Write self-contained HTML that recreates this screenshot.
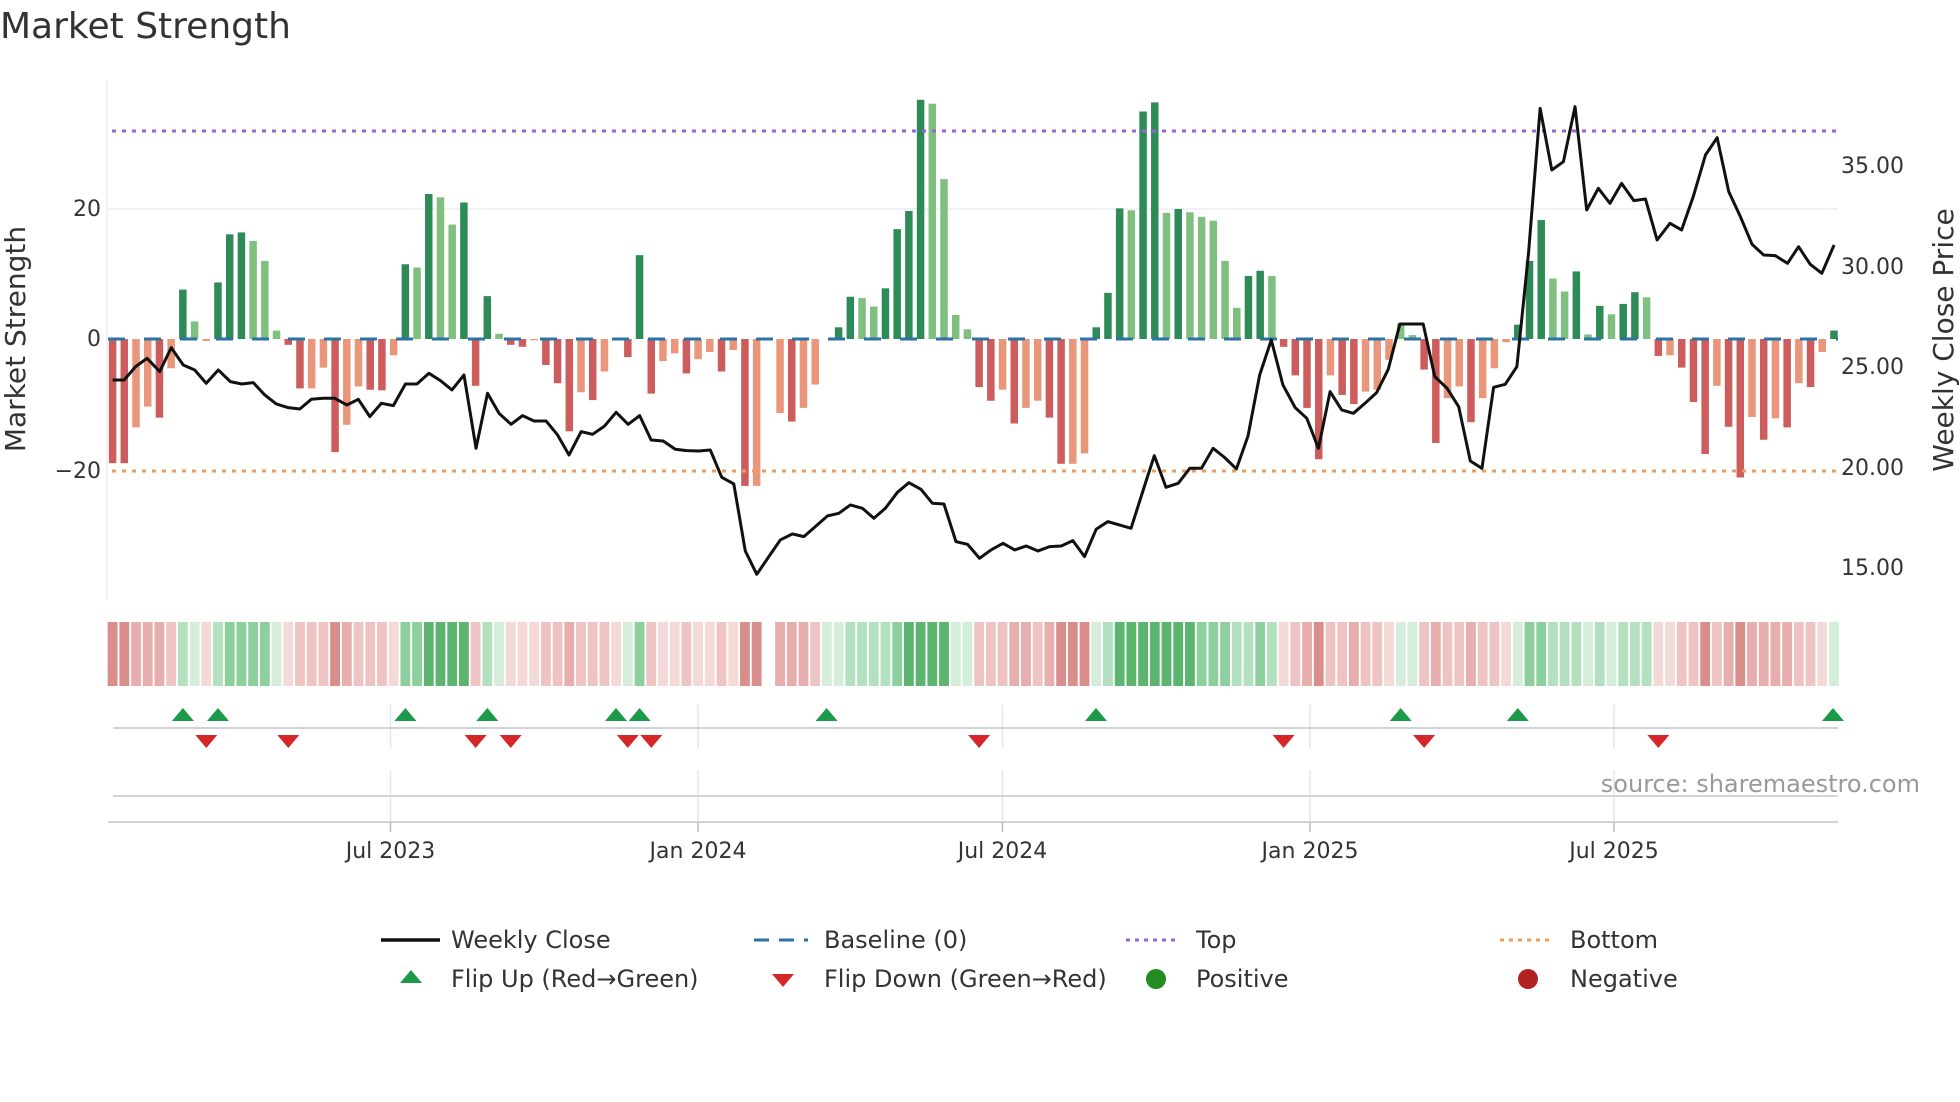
<!DOCTYPE html>
<html><head><meta charset="utf-8"><style>
html,body{margin:0;padding:0;background:#fff;width:1960px;height:1102px;overflow:hidden}
svg{display:block;font-family:"DejaVu Sans","Liberation Sans",sans-serif}
.G{fill:#2e8b57}.g{fill:#7fbf7f}.R{fill:#cd5c5c}.r{fill:#e9967a}
.s1{fill:#f4d9d9}.s2{fill:#eec4c3}.s3{fill:#e6aeac}.s4{fill:#d98e8b}
.t1{fill:#d5eedb}.t2{fill:#b3e0bf}.t3{fill:#8dcf9d}.t4{fill:#5cb56f}
</style></head><body>
<svg width="1960" height="1102" viewBox="0 0 1960 1102">
<text x="0" y="38" font-size="36" fill="#333">Market Strength</text>
<line x1="107" y1="80" x2="107" y2="600" stroke="#eee" stroke-width="1.5"/>
<line x1="108" y1="209" x2="1838" y2="209" stroke="#ececf3" stroke-width="1.5"/>
<text x="101" y="216" font-size="22" fill="#333" text-anchor="end">20</text>
<text x="101" y="346" font-size="22" fill="#333" text-anchor="end">0</text>
<text x="101" y="478" font-size="22" fill="#333" text-anchor="end">−20</text>
<text transform="translate(25,339) rotate(-90)" font-size="28" fill="#333" text-anchor="middle">Market Strength</text>
<text x="1841" y="173" font-size="22" fill="#333">35.00</text>
<text x="1841" y="274" font-size="22" fill="#333">30.00</text>
<text x="1841" y="374" font-size="22" fill="#333">25.00</text>
<text x="1841" y="475" font-size="22" fill="#333">20.00</text>
<text x="1841" y="575" font-size="22" fill="#333">15.00</text>
<text transform="translate(1953,340) rotate(-90)" font-size="28" fill="#333" text-anchor="middle">Weekly Close Price</text>
<g transform="translate(112.6,339) scale(11.71,-6.5)">
<rect class="R" x="-.32" y="-19.1" width=".64" height="19.1"/>
<rect class="R" x=".68" y="-19.1" width=".64" height="19.1"/>
<rect class="r" x="1.68" y="-13.6" width=".64" height="13.6"/>
<rect class="r" x="2.68" y="-10.4" width=".64" height="10.4"/>
<rect class="R" x="3.68" y="-12.1" width=".64" height="12.1"/>
<rect class="r" x="4.68" y="-4.5" width=".64" height="4.5"/>
<rect class="G" x="5.68" y="0" width=".64" height="7.6"/>
<rect class="g" x="6.68" y="0" width=".64" height="2.7"/>
<rect class="r" x="7.68" y="-.3" width=".64" height=".3"/>
<rect class="G" x="8.68" y="0" width=".64" height="8.7"/>
<rect class="G" x="9.68" y="0" width=".64" height="16.1"/>
<rect class="G" x="10.68" y="0" width=".64" height="16.4"/>
<rect class="g" x="11.68" y="0" width=".64" height="15.1"/>
<rect class="g" x="12.68" y="0" width=".64" height="12"/>
<rect class="g" x="13.68" y="0" width=".64" height="1.3"/>
<rect class="R" x="14.68" y="-.9" width=".64" height=".9"/>
<rect class="R" x="15.68" y="-7.6" width=".64" height="7.6"/>
<rect class="r" x="16.68" y="-7.6" width=".64" height="7.6"/>
<rect class="r" x="17.68" y="-4.4" width=".64" height="4.4"/>
<rect class="R" x="18.68" y="-17.4" width=".64" height="17.4"/>
<rect class="r" x="19.68" y="-13.2" width=".64" height="13.2"/>
<rect class="r" x="20.68" y="-7.3" width=".64" height="7.3"/>
<rect class="R" x="21.68" y="-7.8" width=".64" height="7.8"/>
<rect class="R" x="22.68" y="-7.9" width=".64" height="7.9"/>
<rect class="r" x="23.68" y="-2.5" width=".64" height="2.5"/>
<rect class="G" x="24.68" y="0" width=".64" height="11.5"/>
<rect class="g" x="25.68" y="0" width=".64" height="11"/>
<rect class="G" x="26.68" y="0" width=".64" height="22.3"/>
<rect class="g" x="27.68" y="0" width=".64" height="21.8"/>
<rect class="g" x="28.68" y="0" width=".64" height="17.6"/>
<rect class="G" x="29.68" y="0" width=".64" height="21"/>
<rect class="R" x="30.68" y="-7.2" width=".64" height="7.2"/>
<rect class="G" x="31.68" y="0" width=".64" height="6.6"/>
<rect class="g" x="32.68" y="0" width=".64" height=".8"/>
<rect class="R" x="33.68" y="-.9" width=".64" height=".9"/>
<rect class="R" x="34.68" y="-1.2" width=".64" height="1.2"/>
<rect class="r" x="35.68" y="-.2" width=".64" height=".2"/>
<rect class="R" x="36.68" y="-4" width=".64" height="4"/>
<rect class="R" x="37.68" y="-6.8" width=".64" height="6.8"/>
<rect class="R" x="38.68" y="-14.2" width=".64" height="14.2"/>
<rect class="r" x="39.68" y="-8.2" width=".64" height="8.2"/>
<rect class="R" x="40.68" y="-9.4" width=".64" height="9.4"/>
<rect class="r" x="41.68" y="-5" width=".64" height="5"/>
<rect class="R" x="43.68" y="-2.8" width=".64" height="2.8"/>
<rect class="G" x="44.68" y="0" width=".64" height="12.9"/>
<rect class="R" x="45.68" y="-8.4" width=".64" height="8.4"/>
<rect class="r" x="46.68" y="-3.4" width=".64" height="3.4"/>
<rect class="r" x="47.68" y="-2.2" width=".64" height="2.2"/>
<rect class="R" x="48.68" y="-5.3" width=".64" height="5.3"/>
<rect class="r" x="49.68" y="-3.1" width=".64" height="3.1"/>
<rect class="r" x="50.68" y="-2" width=".64" height="2"/>
<rect class="R" x="51.68" y="-5" width=".64" height="5"/>
<rect class="r" x="52.68" y="-1.7" width=".64" height="1.7"/>
<rect class="R" x="53.68" y="-22.6" width=".64" height="22.6"/>
<rect class="r" x="54.68" y="-22.6" width=".64" height="22.6"/>
<rect class="r" x="56.68" y="-11.4" width=".64" height="11.4"/>
<rect class="R" x="57.68" y="-12.7" width=".64" height="12.7"/>
<rect class="r" x="58.68" y="-10.6" width=".64" height="10.6"/>
<rect class="r" x="59.68" y="-7" width=".64" height="7"/>
<rect class="G" x="61.68" y="0" width=".64" height="1.8"/>
<rect class="G" x="62.68" y="0" width=".64" height="6.5"/>
<rect class="g" x="63.68" y="0" width=".64" height="6.3"/>
<rect class="g" x="64.68" y="0" width=".64" height="5"/>
<rect class="G" x="65.68" y="0" width=".64" height="7.8"/>
<rect class="G" x="66.68" y="0" width=".64" height="16.9"/>
<rect class="G" x="67.68" y="0" width=".64" height="19.7"/>
<rect class="G" x="68.68" y="0" width=".64" height="36.8"/>
<rect class="g" x="69.68" y="0" width=".64" height="36.2"/>
<rect class="g" x="70.68" y="0" width=".64" height="24.6"/>
<rect class="g" x="71.68" y="0" width=".64" height="3.7"/>
<rect class="g" x="72.68" y="0" width=".64" height="1.5"/>
<rect class="R" x="73.68" y="-7.4" width=".64" height="7.4"/>
<rect class="R" x="74.68" y="-9.5" width=".64" height="9.5"/>
<rect class="r" x="75.68" y="-7.8" width=".64" height="7.8"/>
<rect class="R" x="76.68" y="-13" width=".64" height="13"/>
<rect class="r" x="77.68" y="-10.6" width=".64" height="10.6"/>
<rect class="r" x="78.68" y="-9.5" width=".64" height="9.5"/>
<rect class="R" x="79.68" y="-12.1" width=".64" height="12.1"/>
<rect class="R" x="80.68" y="-19.2" width=".64" height="19.2"/>
<rect class="r" x="81.68" y="-19.2" width=".64" height="19.2"/>
<rect class="r" x="82.68" y="-17.6" width=".64" height="17.6"/>
<rect class="G" x="83.68" y="0" width=".64" height="1.8"/>
<rect class="G" x="84.68" y="0" width=".64" height="7.1"/>
<rect class="G" x="85.68" y="0" width=".64" height="20.1"/>
<rect class="g" x="86.68" y="0" width=".64" height="19.8"/>
<rect class="G" x="87.68" y="0" width=".64" height="35"/>
<rect class="G" x="88.68" y="0" width=".64" height="36.4"/>
<rect class="g" x="89.68" y="0" width=".64" height="19.4"/>
<rect class="G" x="90.68" y="0" width=".64" height="20"/>
<rect class="g" x="91.68" y="0" width=".64" height="19.5"/>
<rect class="g" x="92.68" y="0" width=".64" height="18.8"/>
<rect class="g" x="93.68" y="0" width=".64" height="18.2"/>
<rect class="g" x="94.68" y="0" width=".64" height="12"/>
<rect class="g" x="95.68" y="0" width=".64" height="4.8"/>
<rect class="G" x="96.68" y="0" width=".64" height="9.7"/>
<rect class="G" x="97.68" y="0" width=".64" height="10.5"/>
<rect class="g" x="98.68" y="0" width=".64" height="9.7"/>
<rect class="R" x="99.68" y="-1.2" width=".64" height="1.2"/>
<rect class="R" x="100.68" y="-5.6" width=".64" height="5.6"/>
<rect class="R" x="101.68" y="-10.6" width=".64" height="10.6"/>
<rect class="R" x="102.68" y="-18.5" width=".64" height="18.5"/>
<rect class="r" x="103.68" y="-5.6" width=".64" height="5.6"/>
<rect class="R" x="104.68" y="-8.6" width=".64" height="8.6"/>
<rect class="R" x="105.68" y="-10" width=".64" height="10"/>
<rect class="r" x="106.68" y="-8.1" width=".64" height="8.1"/>
<rect class="r" x="107.68" y="-7.8" width=".64" height="7.8"/>
<rect class="r" x="108.68" y="-3.2" width=".64" height="3.2"/>
<rect class="g" x="109.68" y="0" width=".64" height="2.4"/>
<rect class="g" x="110.68" y="0" width=".64" height=".6"/>
<rect class="R" x="111.68" y="-4.7" width=".64" height="4.7"/>
<rect class="R" x="112.68" y="-16" width=".64" height="16"/>
<rect class="r" x="113.68" y="-9.1" width=".64" height="9.1"/>
<rect class="r" x="114.68" y="-7.3" width=".64" height="7.3"/>
<rect class="R" x="115.68" y="-12.8" width=".64" height="12.8"/>
<rect class="r" x="116.68" y="-9.1" width=".64" height="9.1"/>
<rect class="r" x="117.68" y="-4.5" width=".64" height="4.5"/>
<rect class="r" x="118.68" y="-.5" width=".64" height=".5"/>
<rect class="G" x="119.68" y="0" width=".64" height="2.2"/>
<rect class="G" x="120.68" y="0" width=".64" height="12"/>
<rect class="G" x="121.68" y="0" width=".64" height="18.3"/>
<rect class="g" x="122.68" y="0" width=".64" height="9.3"/>
<rect class="g" x="123.68" y="0" width=".64" height="7.3"/>
<rect class="G" x="124.68" y="0" width=".64" height="10.4"/>
<rect class="g" x="125.68" y="0" width=".64" height=".7"/>
<rect class="G" x="126.68" y="0" width=".64" height="5.1"/>
<rect class="g" x="127.68" y="0" width=".64" height="3.8"/>
<rect class="G" x="128.68" y="0" width=".64" height="5.4"/>
<rect class="G" x="129.68" y="0" width=".64" height="7.2"/>
<rect class="g" x="130.68" y="0" width=".64" height="6.4"/>
<rect class="R" x="131.68" y="-2.6" width=".64" height="2.6"/>
<rect class="r" x="132.68" y="-2.5" width=".64" height="2.5"/>
<rect class="R" x="133.68" y="-4.4" width=".64" height="4.4"/>
<rect class="R" x="134.68" y="-9.7" width=".64" height="9.7"/>
<rect class="R" x="135.68" y="-17.7" width=".64" height="17.7"/>
<rect class="r" x="136.68" y="-7.2" width=".64" height="7.2"/>
<rect class="R" x="137.68" y="-13.5" width=".64" height="13.5"/>
<rect class="R" x="138.68" y="-21.3" width=".64" height="21.3"/>
<rect class="r" x="139.68" y="-12" width=".64" height="12"/>
<rect class="R" x="140.68" y="-15.5" width=".64" height="15.5"/>
<rect class="r" x="141.68" y="-12.2" width=".64" height="12.2"/>
<rect class="R" x="142.68" y="-13.6" width=".64" height="13.6"/>
<rect class="r" x="143.68" y="-6.8" width=".64" height="6.8"/>
<rect class="R" x="144.68" y="-7.4" width=".64" height="7.4"/>
<rect class="r" x="145.68" y="-2" width=".64" height="2"/>
<rect class="G" x="146.68" y="0" width=".64" height="1.3"/>
</g>
<line x1="108" y1="339" x2="1838" y2="339" stroke="#2b73a6" stroke-width="3" stroke-dasharray="17 19"/>
<line x1="112" y1="131" x2="1838" y2="131" stroke="#9a62d4" stroke-width="3" stroke-dasharray="4 6"/>
<line x1="112" y1="471" x2="1838" y2="471" stroke="#ee9d5e" stroke-width="3" stroke-dasharray="4 6"/>
<g transform="translate(100,80) scale(0.5741,0.3333)">
<polyline fill="none" stroke="#111" stroke-width="3" vector-effect="non-scaling-stroke" stroke-linejoin="round" points="22,900 42,900 62,860 82,835 104,875 124,803 145,855 165,870 185,910 206,870 227,905 247,912 267,908 287,945 307,972 328,983 348,987 368,958 389,955 409,955 430,975 450,958 470,1010 490,970 511,977 532,912 552,912 573,880 593,902 613,930 634,885 655,1105 675,940 695,1000 716,1033 736,1007 756,1023 777,1023 797,1065 817,1125 838,1055 858,1063 879,1038 899,997 920,1033 940,1007 960,1080 981,1083 1002,1108 1022,1112 1043,1113 1063,1110 1083,1192 1104,1212 1124,1413 1144,1483 1165,1430 1185,1380 1206,1362 1226,1370 1246,1340 1267,1308 1287,1300 1307,1275 1328,1285 1348,1315 1368,1285 1389,1237 1409,1208 1430,1228 1450,1270 1470,1272 1491,1385 1511,1393 1532,1435 1552,1410"/>
</g>
<g transform="translate(1000,80) scale(0.6124,0.3333)">
<polyline fill="none" stroke="#111" stroke-width="3" vector-effect="non-scaling-stroke" stroke-linejoin="round" points="-14.7,1410 5,1390 24,1410 43,1398 62,1413 81,1400 100,1398 119,1382 138,1430 157,1348 176,1325 195,1335 214,1345 233,1235 252,1127 271,1222 291,1210 310,1165 329,1165 348,1105 367,1133 386,1167 405,1068 424,885 443,780 462,915 482,983 501,1015 520,1105 539,935 558,990 577,1000 596,970 615,938 634,868 653,732 672,732 691,732 710,890 730,925 749,980 768,1143 787,1165 806,922 825,913 844,860 863,520 882,85 901,270 920,245 939,80 958,390 977,325 996,370 1015,310 1035,362 1054,357 1073,480 1094,430 1113,450 1132,350 1152,225 1171,173 1190,335 1209,410 1228,493 1247,525 1266,527 1286,550 1304,500 1323,553 1342,580 1362,495"/>
</g>
<g transform="translate(112.6,622)">
<g transform="scale(11.71,1)">
<rect class="s4" x="-.42" width=".84" height="64"/><rect class="s4" x=".58" width=".84" height="64"/><rect class="s3" x="1.58" width=".84" height="64"/><rect class="s3" x="2.58" width=".84" height="64"/><rect class="s3" x="3.58" width=".84" height="64"/><rect class="s2" x="4.58" width=".84" height="64"/><rect class="t2" x="5.58" width=".84" height="64"/><rect class="t1" x="6.58" width=".84" height="64"/><rect class="s1" x="7.58" width=".84" height="64"/><rect class="t2" x="8.58" width=".84" height="64"/>
<rect class="t3" x="9.58" width=".84" height="64"/><rect class="t3" x="10.58" width=".84" height="64"/><rect class="t3" x="11.58" width=".84" height="64"/><rect class="t3" x="12.58" width=".84" height="64"/><rect class="t1" x="13.58" width=".84" height="64"/><rect class="s1" x="14.58" width=".84" height="64"/><rect class="s2" x="15.58" width=".84" height="64"/><rect class="s2" x="16.58" width=".84" height="64"/><rect class="s2" x="17.58" width=".84" height="64"/><rect class="s4" x="18.58" width=".84" height="64"/>
<rect class="s3" x="19.58" width=".84" height="64"/><rect class="s2" x="20.58" width=".84" height="64"/><rect class="s2" x="21.58" width=".84" height="64"/><rect class="s2" x="22.58" width=".84" height="64"/><rect class="s1" x="23.58" width=".84" height="64"/><rect class="t3" x="24.58" width=".84" height="64"/><rect class="t3" x="25.58" width=".84" height="64"/><rect class="t4" x="26.58" width=".84" height="64"/><rect class="t4" x="27.58" width=".84" height="64"/><rect class="t4" x="28.58" width=".84" height="64"/>
<rect class="t4" x="29.58" width=".84" height="64"/><rect class="s2" x="30.58" width=".84" height="64"/><rect class="t2" x="31.58" width=".84" height="64"/><rect class="t1" x="32.58" width=".84" height="64"/><rect class="s1" x="33.58" width=".84" height="64"/><rect class="s1" x="34.58" width=".84" height="64"/><rect class="s1" x="35.58" width=".84" height="64"/><rect class="s2" x="36.58" width=".84" height="64"/><rect class="s2" x="37.58" width=".84" height="64"/><rect class="s3" x="38.58" width=".84" height="64"/>
<rect class="s2" x="39.58" width=".84" height="64"/><rect class="s2" x="40.58" width=".84" height="64"/><rect class="s2" x="41.58" width=".84" height="64"/><rect class="s1" x="42.58" width=".84" height="64"/><rect class="t1" x="43.58" width=".84" height="64"/><rect class="t3" x="44.58" width=".84" height="64"/><rect class="s2" x="45.58" width=".84" height="64"/><rect class="s1" x="46.58" width=".84" height="64"/><rect class="s1" x="47.58" width=".84" height="64"/><rect class="s2" x="48.58" width=".84" height="64"/>
<rect class="s1" x="49.58" width=".84" height="64"/><rect class="s1" x="50.58" width=".84" height="64"/><rect class="s2" x="51.58" width=".84" height="64"/><rect class="s1" x="52.58" width=".84" height="64"/><rect class="s4" x="53.58" width=".84" height="64"/><rect class="s4" x="54.58" width=".84" height="64"/><rect class="s3" x="56.58" width=".84" height="64"/><rect class="s3" x="57.58" width=".84" height="64"/><rect class="s3" x="58.58" width=".84" height="64"/>
<rect class="s2" x="59.58" width=".84" height="64"/><rect class="t1" x="60.58" width=".84" height="64"/><rect class="t1" x="61.58" width=".84" height="64"/><rect class="t2" x="62.58" width=".84" height="64"/><rect class="t2" x="63.58" width=".84" height="64"/><rect class="t2" x="64.58" width=".84" height="64"/><rect class="t2" x="65.58" width=".84" height="64"/><rect class="t3" x="66.58" width=".84" height="64"/><rect class="t4" x="67.58" width=".84" height="64"/><rect class="t4" x="68.58" width=".84" height="64"/>
<rect class="t4" x="69.58" width=".84" height="64"/><rect class="t4" x="70.58" width=".84" height="64"/><rect class="t1" x="71.58" width=".84" height="64"/><rect class="t1" x="72.58" width=".84" height="64"/><rect class="s2" x="73.58" width=".84" height="64"/><rect class="s2" x="74.58" width=".84" height="64"/><rect class="s2" x="75.58" width=".84" height="64"/><rect class="s3" x="76.58" width=".84" height="64"/><rect class="s3" x="77.58" width=".84" height="64"/><rect class="s2" x="78.58" width=".84" height="64"/>
<rect class="s3" x="79.58" width=".84" height="64"/><rect class="s4" x="80.58" width=".84" height="64"/><rect class="s4" x="81.58" width=".84" height="64"/><rect class="s4" x="82.58" width=".84" height="64"/><rect class="t1" x="83.58" width=".84" height="64"/><rect class="t2" x="84.58" width=".84" height="64"/><rect class="t4" x="85.58" width=".84" height="64"/><rect class="t4" x="86.58" width=".84" height="64"/><rect class="t4" x="87.58" width=".84" height="64"/><rect class="t4" x="88.58" width=".84" height="64"/>
<rect class="t4" x="89.58" width=".84" height="64"/><rect class="t4" x="90.58" width=".84" height="64"/><rect class="t4" x="91.58" width=".84" height="64"/><rect class="t3" x="92.58" width=".84" height="64"/><rect class="t3" x="93.58" width=".84" height="64"/><rect class="t3" x="94.58" width=".84" height="64"/><rect class="t2" x="95.58" width=".84" height="64"/><rect class="t2" x="96.58" width=".84" height="64"/><rect class="t3" x="97.58" width=".84" height="64"/><rect class="t2" x="98.58" width=".84" height="64"/>
<rect class="s1" x="99.58" width=".84" height="64"/><rect class="s2" x="100.58" width=".84" height="64"/><rect class="s3" x="101.58" width=".84" height="64"/><rect class="s4" x="102.58" width=".84" height="64"/><rect class="s2" x="103.58" width=".84" height="64"/><rect class="s2" x="104.58" width=".84" height="64"/><rect class="s3" x="105.58" width=".84" height="64"/><rect class="s2" x="106.58" width=".84" height="64"/><rect class="s2" x="107.58" width=".84" height="64"/><rect class="s1" x="108.58" width=".84" height="64"/>
<rect class="t1" x="109.58" width=".84" height="64"/><rect class="t1" x="110.58" width=".84" height="64"/><rect class="s2" x="111.58" width=".84" height="64"/><rect class="s3" x="112.58" width=".84" height="64"/><rect class="s2" x="113.58" width=".84" height="64"/><rect class="s2" x="114.58" width=".84" height="64"/><rect class="s3" x="115.58" width=".84" height="64"/><rect class="s2" x="116.58" width=".84" height="64"/><rect class="s2" x="117.58" width=".84" height="64"/><rect class="s1" x="118.58" width=".84" height="64"/>
<rect class="t1" x="119.58" width=".84" height="64"/><rect class="t3" x="120.58" width=".84" height="64"/><rect class="t3" x="121.58" width=".84" height="64"/><rect class="t2" x="122.58" width=".84" height="64"/><rect class="t2" x="123.58" width=".84" height="64"/><rect class="t2" x="124.58" width=".84" height="64"/><rect class="t1" x="125.58" width=".84" height="64"/><rect class="t2" x="126.58" width=".84" height="64"/><rect class="t1" x="127.58" width=".84" height="64"/><rect class="t2" x="128.58" width=".84" height="64"/>
<rect class="t2" x="129.58" width=".84" height="64"/><rect class="t2" x="130.58" width=".84" height="64"/><rect class="s1" x="131.58" width=".84" height="64"/><rect class="s1" x="132.58" width=".84" height="64"/><rect class="s2" x="133.58" width=".84" height="64"/><rect class="s2" x="134.58" width=".84" height="64"/><rect class="s4" x="135.58" width=".84" height="64"/><rect class="s2" x="136.58" width=".84" height="64"/><rect class="s3" x="137.58" width=".84" height="64"/><rect class="s4" x="138.58" width=".84" height="64"/>
<rect class="s3" x="139.58" width=".84" height="64"/><rect class="s3" x="140.58" width=".84" height="64"/><rect class="s3" x="141.58" width=".84" height="64"/><rect class="s3" x="142.58" width=".84" height="64"/><rect class="s2" x="143.58" width=".84" height="64"/><rect class="s2" x="144.58" width=".84" height="64"/><rect class="s1" x="145.58" width=".84" height="64"/><rect class="t1" x="146.58" width=".84" height="64"/>
</g></g>
<g stroke="#e4e6ea" stroke-width="1.5">
<line x1="390.5" y1="705" x2="390.5" y2="748"/><line x1="698" y1="705" x2="698" y2="748"/><line x1="1002.5" y1="705" x2="1002.5" y2="748"/><line x1="1310" y1="705" x2="1310" y2="748"/><line x1="1614" y1="705" x2="1614" y2="748"/>
<line x1="390.5" y1="770" x2="390.5" y2="822"/><line x1="698" y1="770" x2="698" y2="822"/><line x1="1002.5" y1="770" x2="1002.5" y2="822"/><line x1="1310" y1="770" x2="1310" y2="822"/><line x1="1614" y1="770" x2="1614" y2="822"/>
</g>
<line x1="113" y1="728" x2="1838" y2="728" stroke="#d0d3d8" stroke-width="2"/>
<line x1="113" y1="796" x2="1838" y2="796" stroke="#d0d3d8" stroke-width="2"/>
<line x1="108" y1="822" x2="1838" y2="822" stroke="#d0d3d8" stroke-width="2"/>
<g stroke="#bbb" stroke-width="1.5"><line x1="390.5" y1="822" x2="390.5" y2="832"/><line x1="698" y1="822" x2="698" y2="832"/><line x1="1002.5" y1="822" x2="1002.5" y2="832"/><line x1="1310" y1="822" x2="1310" y2="832"/><line x1="1614" y1="822" x2="1614" y2="832"/></g>
<g font-size="22" fill="#333" text-anchor="middle"><text x="390.5" y="858">Jul 2023</text><text x="698" y="858">Jan 2024</text><text x="1002.5" y="858">Jul 2024</text><text x="1310" y="858">Jan 2025</text><text x="1614" y="858">Jul 2025</text></g>
<defs><path id="up" d="M-11,6 L0,-7 L11,6 Z" fill="#1a9a4a"/><path id="dn" d="M-11,-6 L11,-6 L0,7 Z" fill="#d62728"/></defs>
<g>
<use href="#up" x="182.9" y="715"/><use href="#up" x="218" y="715"/><use href="#up" x="405.4" y="715"/><use href="#up" x="487.3" y="715"/><use href="#up" x="616" y="715"/><use href="#up" x="639.6" y="715"/><use href="#up" x="826.6" y="715"/><use href="#up" x="1096" y="715"/><use href="#up" x="1400.7" y="715"/><use href="#up" x="1517.8" y="715"/><use href="#up" x="1833" y="715"/>
<use href="#dn" x="206.3" y="741"/><use href="#dn" x="288.3" y="741"/><use href="#dn" x="475.6" y="741"/><use href="#dn" x="510.7" y="741"/><use href="#dn" x="627.8" y="741"/><use href="#dn" x="651.3" y="741"/><use href="#dn" x="979.1" y="741"/><use href="#dn" x="1283.6" y="741"/><use href="#dn" x="1424.1" y="741"/><use href="#dn" x="1658.3" y="741"/>
</g>
<text x="1920" y="792" font-size="24" fill="#999" text-anchor="end">source: sharemaestro.com</text>
<g font-size="24" fill="#333">
<line x1="381" y1="940" x2="440" y2="940" stroke="#111" stroke-width="3.5"/><text x="451" y="948">Weekly Close</text>
<line x1="754" y1="940" x2="808" y2="940" stroke="#2b73a6" stroke-width="3" stroke-dasharray="15 10"/><text x="824" y="948">Baseline (0)</text>
<line x1="1126" y1="940" x2="1180" y2="940" stroke="#9a62d4" stroke-width="3" stroke-dasharray="4 5"/><text x="1196" y="948">Top</text>
<line x1="1500" y1="940" x2="1554" y2="940" stroke="#ee9d5e" stroke-width="3" stroke-dasharray="4 5"/><text x="1570" y="948">Bottom</text>
<use href="#up" x="411" y="977"/><text x="451" y="987">Flip Up (Red→Green)</text>
<use href="#dn" x="783" y="980"/><text x="824" y="987">Flip Down (Green→Red)</text>
<circle cx="1156" cy="979" r="10" fill="#228b22"/><text x="1196" y="987">Positive</text>
<circle cx="1528" cy="979" r="10" fill="#b22222"/><text x="1570" y="987">Negative</text>
</g>
</svg>
</body></html>
